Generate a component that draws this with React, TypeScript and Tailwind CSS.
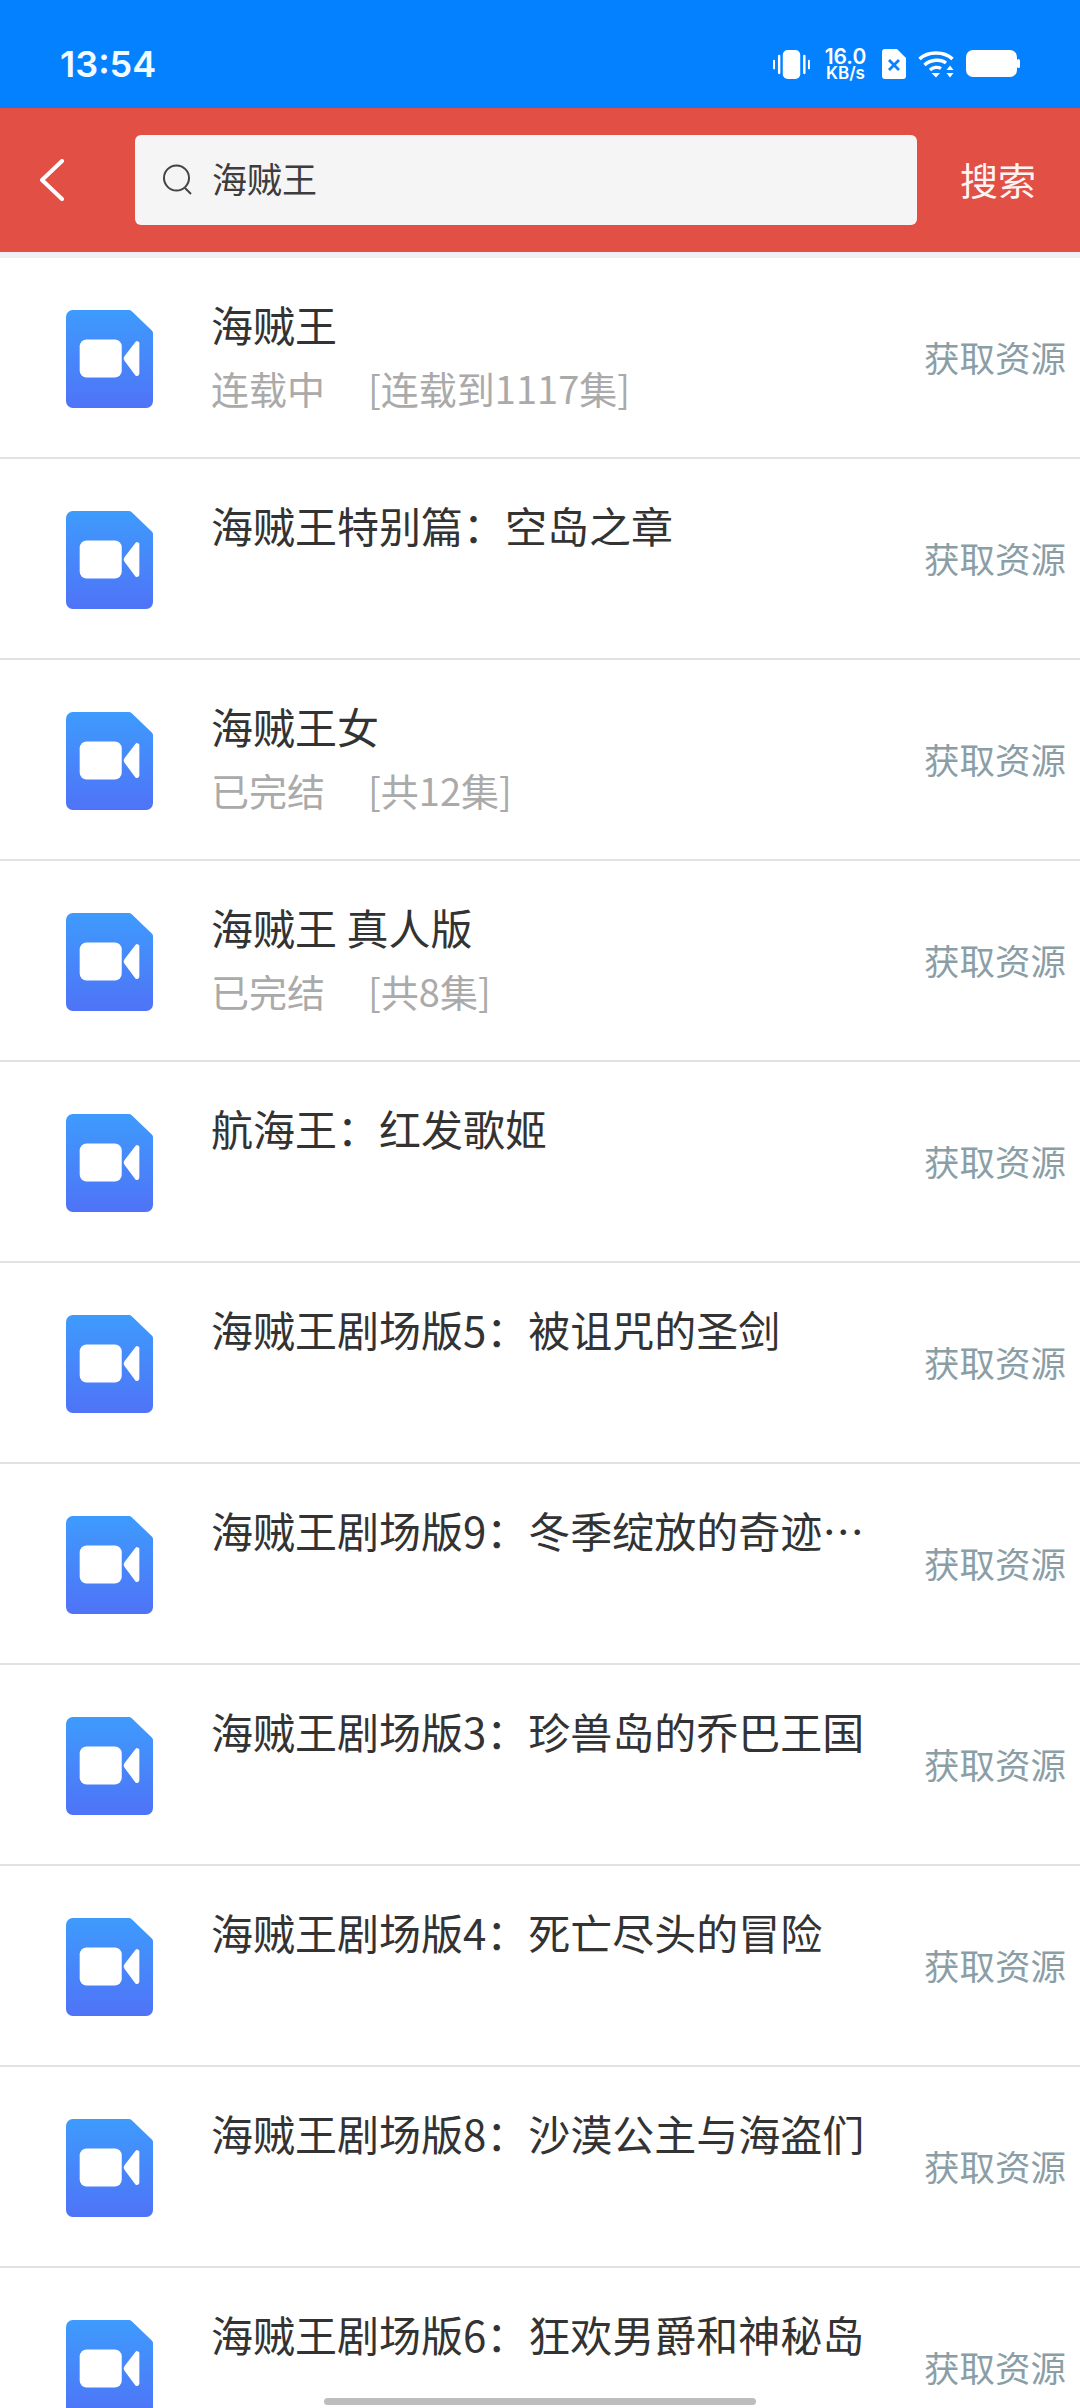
const FONT = "font-['Noto_Sans_CJK_SC','Noto_Sans',sans-serif]";

const rows: { title: string; sub?: string; ep?: string }[] = [
  { title: "海贼王", sub: "连载中", ep: "[连载到1117集]" },
  { title: "海贼王特别篇：空岛之章" },
  { title: "海贼王女", sub: "已完结", ep: "[共12集]" },
  { title: "海贼王 真人版", sub: "已完结", ep: "[共8集]" },
  { title: "航海王：红发歌姬" },
  { title: "海贼王剧场版5：被诅咒的圣剑" },
  { title: "海贼王剧场版9：冬季绽放的奇迹…" },
  { title: "海贼王剧场版3：珍兽岛的乔巴王国" },
  { title: "海贼王剧场版4：死亡尽头的冒险" },
  { title: "海贼王剧场版8：沙漠公主与海盗们" },
  { title: "海贼王剧场版6：狂欢男爵和神秘岛" },
];

function FileIcon({ id }: { id: number }) {
  return (
    <svg width="88" height="100" viewBox="0 0 90 100" className="shrink-0">
      <defs>
        <linearGradient id={`g${id}`} x1="0" y1="0" x2="0" y2="1">
          <stop offset="0" stopColor="#3E9BFD" />
          <stop offset="1" stopColor="#4F73F7" />
        </linearGradient>
      </defs>
      <path
        d="M7 0H64a4 4 0 0 1 3 1L88 21a4 4 0 0 1 1 3V93a7 7 0 0 1-7 7H7a7 7 0 0 1-7-7V7a7 7 0 0 1 7-7Z"
        fill={`url(#g${id})`}
      />
      <rect x="14" y="30" width="43" height="39" rx="7" fill="#fff" />
      <path d="M75 33V65a2.500 2.500 0 0 1-4 1.800L60 52a4 4 0 0 1 0-5L71 32.500a2.500 2.500 0 0 1 4 .5Z" fill="#fff" />
    </svg>
  );
}

function Row({ title, sub, ep, id }: { title: string; sub?: string; ep?: string; id: number }) {
  return (
    <div className="relative flex h-[201px] shrink-0 border-b-2 border-[#e2e2e2] bg-white pl-[66px]">
      <div className="mt-[51px]">
        <FileIcon id={id} />
      </div>
      <div className="ml-[57px] min-w-0 flex-1 pt-[41px]">
        <div className="h-[50px] whitespace-nowrap text-[42px] leading-[50px] text-[#333333]">{title}</div>
        {sub && (
          <div className="mt-[17px] flex h-[44px] items-center whitespace-nowrap text-[38px] leading-[44px] text-[#aaaaaa]">
            <span>{sub}</span>
            <span className="ml-[43px]">{ep}</span>
          </div>
        )}
      </div>
      <div className="mr-[14px] mt-[74px] h-[50px] whitespace-nowrap text-[35.500px] leading-[50px] text-[#8b9ea6]">获取资源</div>
    </div>
  );
}

function StatusIcons() {
  return (
    <div className="flex items-center text-white">
      <svg width="37" height="31" viewBox="0 0 38 32" fill="#fff">
        <rect x="10" y="1" width="18" height="30" rx="5" />
        <rect x="0" y="11" width="2" height="10" rx="1" />
        <rect x="5" y="6" width="2.500" height="20" rx="1.200" />
        <rect x="31" y="6" width="2.500" height="20" rx="1.200" />
        <rect x="36" y="11" width="2" height="10" rx="1" />
      </svg>
      <div className="ml-[13px] flex w-[45px] flex-col items-center font-['Inter',sans-serif] font-semibold">
        <div className="h-[18px] text-[21px] leading-[18px]">16.0</div>
        <div className="h-[15px] text-[17px] leading-[15px]">KB/s</div>
      </div>
      <svg className="ml-[14px]" width="24" height="30" viewBox="0 0 24 30">
        <path d="M3 0H15L24 9V27a3 3 0 0 1-3 3H3a3 3 0 0 1-3-3V3a3 3 0 0 1 3-3Z" fill="#fff" />
        <path d="M7 11L17 21M17 11L7 21" stroke="#0880FF" strokeWidth="2.800" />
      </svg>
      <svg className="ml-[12px]" width="36" height="28" viewBox="0 0 36 28" fill="none">
        <path d="M1.500 9C10 1 26 1 34.500 9" stroke="#fff" strokeWidth="3.500" />
        <path d="M6.500 15C13 9 23 9 28 13" stroke="#fff" strokeWidth="3.500" />
        <path d="M12 20C15 17 20 16.500 23 18.500" stroke="#fff" strokeWidth="3.200" />
        <path d="M13.500 23H22L18 27.500Z" fill="#fff" />
        <path d="M32 15.500L35.500 20H28.500ZM32 27.500L28.500 23H35.500Z" fill="#fff" />
      </svg>
      <svg className="ml-[12px]" width="54" height="28" viewBox="0 0 54 28" fill="#fff">
        <rect x="0" y="0" width="51" height="27" rx="7" />
        <rect x="51" y="9" width="3" height="9" rx="1.500" />
      </svg>
    </div>
  );
}

export default function App() {
  return (
    <div className={`relative flex h-[2408px] w-[1080px] flex-col overflow-hidden bg-white ${FONT}`}>
      <div className="flex h-[108px] shrink-0 items-center justify-between bg-[#0481FF] pt-[20px] pl-[60px] pr-[60px]">
        <span className="font-['Inter',sans-serif] text-[36px] font-semibold text-[#f2fbff]">13:54</span>
        <StatusIcons />
      </div>

      <div className="flex h-[144px] shrink-0 items-center bg-[#E24F45]">
        <svg className="ml-[39px]" width="26" height="42" viewBox="0 0 26 42" fill="none">
          <path d="M23 2L3 21L23 40" stroke="#fff" strokeWidth="4" strokeLinecap="round" strokeLinejoin="round" />
        </svg>
        <div className="ml-[70px] flex h-[90px] w-[782px] items-center rounded-[6px] bg-[#F5F5F5] pl-[28px]">
          <svg width="30" height="32" viewBox="0 0 30 32" fill="none" stroke="#444" strokeWidth="2">
            <circle cx="13.500" cy="14" r="12.500" />
            <path d="M22 24L28 30" />
          </svg>
          <span className="ml-[19px] -translate-y-[2px] text-[35px] leading-[40px] text-[#3d3d3d]">海贼王</span>
        </div>
        <span className="ml-[43px] -translate-y-[1px] whitespace-nowrap text-[38px] leading-[50px] text-[#fdf3f2]">搜索</span>
      </div>

      <div className="h-[6px] shrink-0 bg-[#F0EFF4]" />

      <div className="flex flex-col">
        {rows.map((r, i) => (
          <Row key={i} id={i} title={r.title} sub={r.sub} ep={r.ep} />
        ))}
      </div>

      <div className="absolute left-[324px] top-[2398px] h-[7px] w-[432px] rounded-full bg-[#BDBDBD]" />
    </div>
  );
}
